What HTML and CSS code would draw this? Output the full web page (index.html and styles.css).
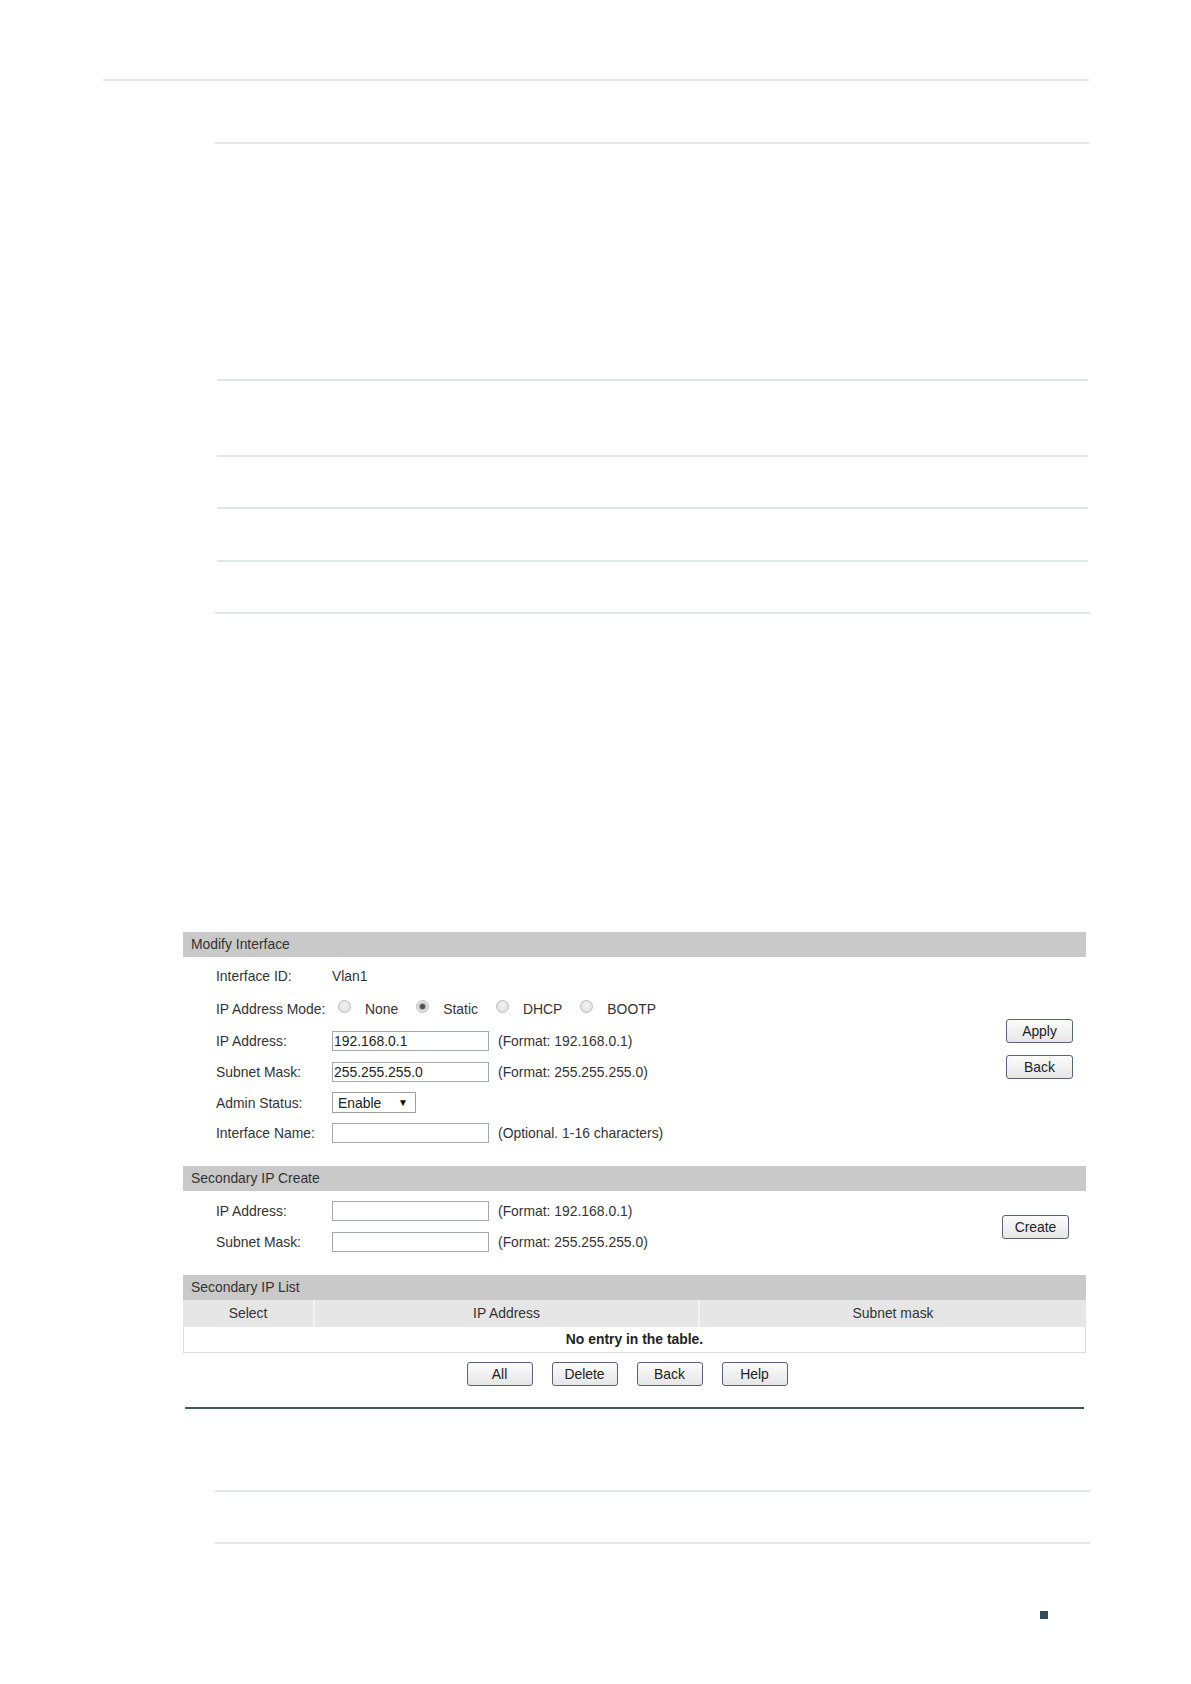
FILE: index.html
```html
<!DOCTYPE html>
<html lang="en">
<head>
<meta charset="utf-8">
<title>Modify Interface</title>
<link rel="stylesheet" href="styles.css">
</head>
<body>
<div class="page">
  <div class="rule rule-top"></div>
  <div class="rule doc doc-1"></div>
  <div class="rule doc doc-2"></div>
  <div class="rule doc doc-3"></div>
  <div class="rule doc doc-4"></div>
  <div class="rule doc doc-5"></div>
  <div class="rule doc doc-6 doc-wide"></div>

  <section class="panel">
    <div class="bar">Modify Interface</div>
    <div class="form form-main">
      <div class="fields fields-main">
        <div class="label">Interface ID:</div>
        <div class="value">Vlan1</div>

        <div class="label">IP Address Mode:</div>
        <div class="value radios">
          <span class="opt"><span class="radio"></span><span class="opt-text">None</span></span>
          <span class="opt"><span class="radio checked"></span><span class="opt-text">Static</span></span>
          <span class="opt"><span class="radio"></span><span class="opt-text">DHCP</span></span>
          <span class="opt"><span class="radio"></span><span class="opt-text">BOOTP</span></span>
        </div>

        <div class="label">IP Address:</div>
        <div class="value"><span class="input">192.168.0.1</span><span class="hint">(Format: 192.168.0.1)</span></div>

        <div class="label">Subnet Mask:</div>
        <div class="value"><span class="input">255.255.255.0</span><span class="hint">(Format: 255.255.255.0)</span></div>

        <div class="label">Admin Status:</div>
        <div class="value"><span class="select"><span class="select-text">Enable</span><span class="caret">&#9660;</span></span></div>

        <div class="label">Interface Name:</div>
        <div class="value"><span class="input"></span><span class="hint">(Optional. 1-16 characters)</span></div>
      </div>
      <div class="actions actions-main">
        <span class="btn">Apply</span>
        <span class="btn">Back</span>
      </div>
    </div>

    <div class="bar">Secondary IP Create</div>
    <div class="form form-create">
      <div class="fields fields-create">
        <div class="label">IP Address:</div>
        <div class="value"><span class="input"></span><span class="hint">(Format: 192.168.0.1)</span></div>

        <div class="label">Subnet Mask:</div>
        <div class="value"><span class="input"></span><span class="hint">(Format: 255.255.255.0)</span></div>
      </div>
      <div class="actions actions-create">
        <span class="btn">Create</span>
      </div>
    </div>

    <div class="bar">Secondary IP List</div>
    <div class="table">
      <div class="th">Select</div>
      <div class="th th-sep">IP Address</div>
      <div class="th th-sep">Subnet mask</div>
      <div class="td-empty">No entry in the table.</div>
    </div>
    <div class="table-buttons">
      <span class="btn btn-sm">All</span>
      <span class="btn btn-sm">Delete</span>
      <span class="btn btn-sm">Back</span>
      <span class="btn btn-sm">Help</span>
    </div>
  </section>

  <div class="dark-rule"></div>
  <div class="rule doc doc-wide doc-7"></div>
  <div class="rule doc doc-wide doc-8"></div>
  <div class="mark"></div>
</div>
</body>
</html>
```

FILE: styles.css
```css
html, body {
  margin: 0;
  padding: 0;
  background: #ffffff;
}

body {
  font-family: "Liberation Sans", Arial, sans-serif;
  font-size: 13.9px;
  color: #333333;
}

.page {
  width: 1191px;
  min-height: 1684px;
  display: flex;
  flex-direction: column;
}

.rule {
  height: 2px;
  background: #e2e5e5;
  flex: none;
}

.rule-top {
  margin-top: 79px;
  margin-left: 103px;
  width: 986px;
}

.doc {
  margin-left: 217px;
  width: 871px;
}

.doc-wide {
  margin-left: 215px;
  width: 875px;
}

.doc-1 { margin-top: 61px; margin-left: 215px; width: 874px; }
.doc-2 { margin-top: 235px; }
.doc-3 { margin-top: 74px; }
.doc-4 { margin-top: 50px; }
.doc-5 { margin-top: 51px; }
.doc-6 { margin-top: 50px; }

/* ---------- panel ---------- */
.panel {
  margin-top: 318px;
  margin-left: 183px;
  width: 903px;
  display: flex;
  flex-direction: column;
}

.bar {
  height: 25px;
  line-height: 25px;
  background: #c9c9c9;
  padding-left: 8px;
  color: #333333;
}

.form {
  display: flex;
  justify-content: space-between;
  padding-left: 33px;
}

.form-main {
  padding-top: 2.5px;
  margin-bottom: 18.5px;
}

.form-create {
  padding-top: 4px;
  margin-bottom: 18px;
}

.fields {
  display: grid;
  grid-template-columns: 116px auto;
  align-items: center;
}

.fields-main {
  grid-template-rows: 33px 32px 32px 31px 30px 30px;
}

.fields-create {
  grid-template-rows: 31px 31px;
}

.label {
  white-space: nowrap;
}

.value {
  display: flex;
  align-items: center;
  gap: 9px;
  white-space: nowrap;
}

.input {
  box-sizing: border-box;
  width: 157px;
  height: 20px;
  line-height: 18px;
  border: 1px solid #a3a8ad;
  padding-left: 1px;
  color: #222222;
  background: #ffffff;
}

.hint {
  color: #333333;
}

/* radios */
.radios {
  gap: 0;
  margin-left: 6px;
}

.opt {
  display: inline-flex;
  align-items: center;
  margin-right: 18px;
}

.radio {
  box-sizing: border-box;
  width: 13px;
  height: 13px;
  border-radius: 50%;
  border: 1px solid #bcbcbc;
  background: radial-gradient(circle at 50% 40%, #f2f2f2 0%, #dcdcdc 100%);
  margin-right: 14px;
  position: relative;
  top: -2px;
}

.radio.checked {
  background: radial-gradient(circle, #444444 0, #555555 2px, #9a9a9a 3px, #e4e4e4 4px, #dcdcdc 100%);
}

.opt-text {
  color: #333333;
}

/* select */
.select {
  box-sizing: border-box;
  width: 84px;
  height: 21px;
  border: 1px solid #a0a0a0;
  display: flex;
  align-items: center;
  justify-content: space-between;
  padding: 0 7px 0 5px;
  color: #222222;
}

.caret {
  font-size: 10px;
  color: #111111;
}

/* buttons */
.btn {
  box-sizing: border-box;
  display: inline-flex;
  align-items: center;
  justify-content: center;
  width: 67px;
  height: 24px;
  border: 1px solid #56647a;
  border-radius: 3px;
  background: linear-gradient(#fbfbfb, #e6e6e6);
  color: #222222;
}

.actions {
  display: flex;
  flex-direction: column;
  gap: 12px;
}

.actions-main {
  padding-top: 59px;
  padding-right: 13px;
}

.actions-create {
  padding-top: 20px;
  padding-right: 17px;
}

/* table */
.table {
  display: grid;
  grid-template-columns: 130px 385px 1fr;
}

.th {
  height: 27px;
  line-height: 27px;
  background: #e6e6e6;
  text-align: center;
  color: #333333;
}

.th-sep {
  border-left: 2px solid #f3f3f3;
}

.td-empty {
  grid-column: 1 / 4;
  box-sizing: border-box;
  height: 26px;
  line-height: 25px;
  border: 1px solid #dcdcdc;
  border-top: none;
  text-align: center;
  font-weight: bold;
  color: #222222;
}

.table-buttons {
  display: flex;
  justify-content: center;
  gap: 19px;
  margin-top: 9px;
  padding-right: 15px;
}

.btn-sm {
  width: 66px;
}

/* bottom */
.dark-rule {
  margin-top: 21px;
  margin-left: 185px;
  width: 899px;
  height: 2px;
  background: #3b5763;
}

.doc-7 { margin-top: 81px; }
.doc-8 { margin-top: 50px; }

.mark {
  margin-top: 67px;
  margin-left: 1040px;
  width: 8px;
  height: 8px;
  background: #2e4f5a;
}
```
